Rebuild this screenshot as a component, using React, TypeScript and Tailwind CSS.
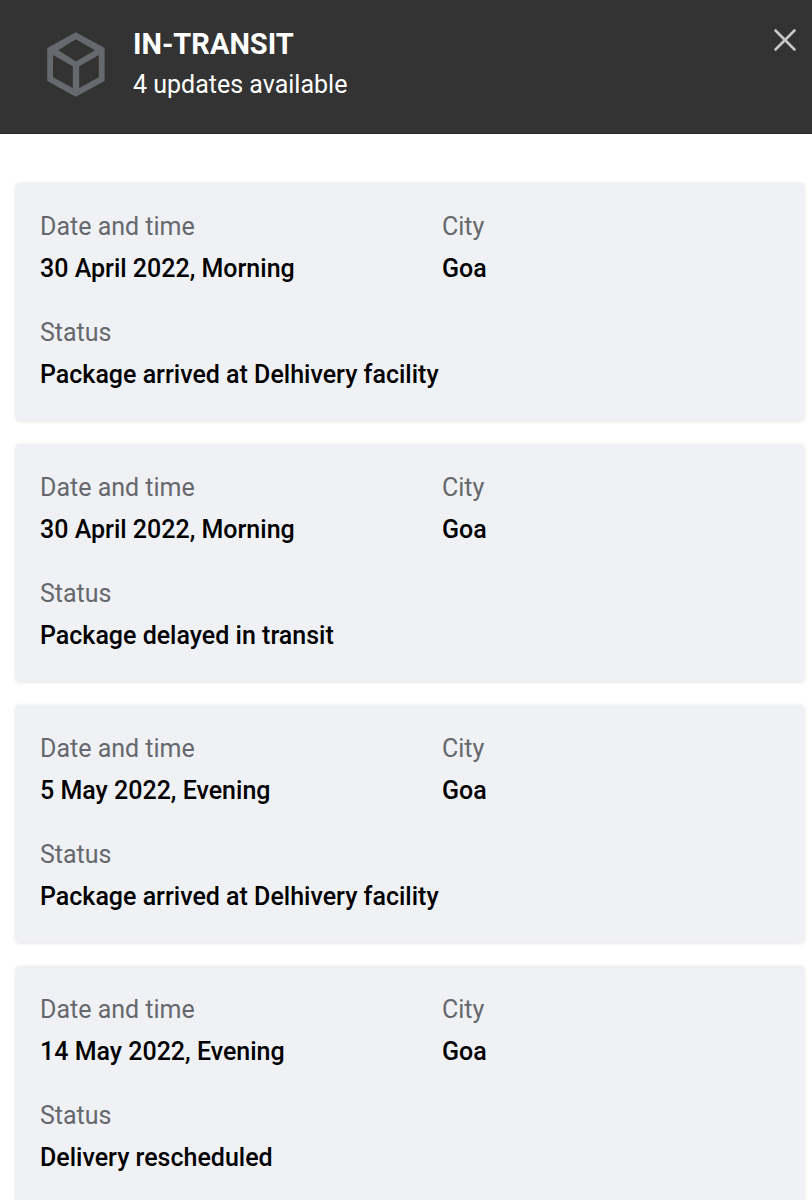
import React from "react";

type Update = {
	date: string;
	city: string;
	status: string;
};

const updates: Update[] = [
	{
		date: "30 April 2022, Morning",
		city: "Goa",
		status: "Package arrived at Delhivery facility",
	},
	{
		date: "30 April 2022, Morning",
		city: "Goa",
		status: "Package delayed in transit",
	},
	{
		date: "5 May 2022, Evening",
		city: "Goa",
		status: "Package arrived at Delhivery facility",
	},
	{
		date: "14 May 2022, Evening",
		city: "Goa",
		status: "Delivery rescheduled",
	},
];

const PackageIcon: React.FC = () => (
	<svg
		className="w-[58px] h-[66px] shrink-0 text-[#66696e]"
		viewBox="0 0 58 66"
		fill="currentColor"
		fillRule="evenodd"
		aria-hidden="true"
	>
		<path d="M28.8 .3 57.6 16V49L28.8 64.7 .3 49V16ZM28.8 7.2 11.2 18.3 29 29.5 48 18.3ZM6 23V45.3L25.8 56V34.3ZM32.2 34.3V56L51.8 45.3V23Z" />
	</svg>
);

const CloseIcon: React.FC = () => (
	<svg
		className="size-6"
		viewBox="0 0 24 24"
		fill="none"
		stroke="currentColor"
		strokeWidth="2.6"
		strokeLinecap="round"
		aria-hidden="true"
	>
		<path d="M2.5 2.5 21.5 21.5M21.5 2.5 2.5 21.5" />
	</svg>
);

const Field: React.FC<{ label: string; value: string; wide?: boolean }> = ({
	label,
	value,
	wide,
}) => {
	return (
		<div className={wide ? "col-span-2 space-y-1" : "space-y-1"}>
			<dt className="text-[#65686d]">{label}</dt>
			<dd className="font-medium text-black">{value}</dd>
		</div>
	);
};

const UpdateCard: React.FC<{ update: Update }> = ({ update }) => {
	return (
		<li className="pt-[25px] px-6 pb-[26px] bg-[#f0f1f5] rounded-[3px] shadow-[0_1px_4px_rgba(0,0,0,0.13)]">
			<dl className="grid grid-cols-2 gap-x-16 gap-y-[26px] text-[25px] leading-[38px]">
				<Field label="Date and time" value={update.date} />
				<Field label="City" value={update.city} />
				<Field label="Status" value={update.status} wide />
			</dl>
		</li>
	);
};

const App: React.FC = () => {
	return (
		<div className="min-h-screen bg-white font-['Roboto',sans-serif]">
			<header className="flex items-start justify-between pt-6 pb-7 pl-[47px] pr-[15px] bg-[#333333] border-b border-[#2a2a2a]">
				<div className="flex items-center gap-7 text-white leading-[40px]">
					<PackageIcon />
					<div className="space-y-px">
						<h1 className="text-[29px] font-bold">IN-TRANSIT</h1>
						<p className="text-[25px]">
							{updates.length} updates available
						</p>
					</div>
				</div>
				<button
					type="button"
					aria-label="Close"
					className="mt-1 text-[#c8c8c8] cursor-pointer"
				>
					<CloseIcon />
				</button>
			</header>
			<main>
				<ul className="flex flex-col gap-6 pt-[49px] pl-4 pr-2">
					{updates.map((update, index) => (
						<UpdateCard key={index} update={update} />
					))}
				</ul>
			</main>
		</div>
	);
};

export default App;
